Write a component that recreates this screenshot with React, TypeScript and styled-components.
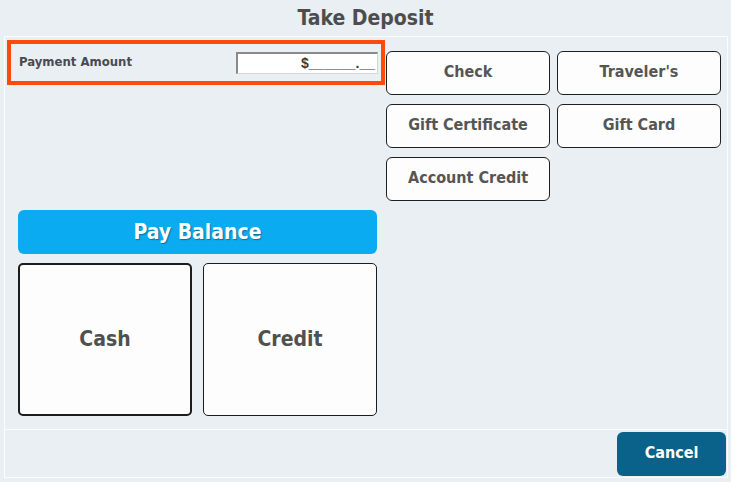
import React from 'react';
import styled, { createGlobalStyle } from 'styled-components';

const GlobalStyle = createGlobalStyle`
  html, body {
    margin: 0;
    padding: 0;
    background: #e9eff2;
  }
  body {
    font-family: "DejaVu Sans Condensed", "DejaVu Sans", "Liberation Sans", sans-serif;
  }
`;

const Screen = styled.div`
  width: 731px;
  height: 482px;
  display: flex;
  flex-direction: column;
  background: #e9eff2;
  overflow: hidden;
`;

const Title = styled.h1`
  margin: 0;
  height: 36px;
  line-height: 36px;
  text-align: center;
  font-size: 21px;
  font-weight: bold;
  color: #4d4d4d;
`;

const Panel = styled.div`
  flex: 1;
  margin: 0 3px 4px 4px;
  border: 1px solid #fbfcfd;
  display: flex;
  flex-direction: column;
`;

const Body = styled.div`
  flex: 1;
  display: flex;
  padding: 3px 0 0 2px;
`;

const LeftColumn = styled.div`
  width: 378px;
  display: flex;
  flex-direction: column;
`;

const PaymentRow = styled.div`
  height: 45px;
  box-sizing: border-box;
  border: 4px solid #ff4a0c;
  display: flex;
  align-items: center;
  justify-content: space-between;
  padding: 0 3px 0 8px;
`;

const Label = styled.span`
  font-size: 13px;
  font-weight: bold;
  color: #4a4a52;
  margin-top: -2px;
`;

const AmountField = styled.div`
  width: 142px;
  height: 22px;
  box-sizing: border-box;
  background: #fff;
  border-style: solid;
  border-width: 2px 1px 1px 2px;
  border-color: #8a8a8a #d4d4d4 #d4d4d4 #8a8a8a;
  text-align: right;
  padding-right: 2px;
  font-family: "Liberation Sans", sans-serif;
  font-size: 14px;
  font-weight: bold;
  line-height: 19px;
  color: #3a3a3a;
`;

const Lower = styled.div`
  margin-top: auto;
  padding: 0 8px 13px 11px;
  display: flex;
  flex-direction: column;
  gap: 9px;
`;

const PayBalance = styled.button`
  height: 44px;
  border: none;
  border-radius: 6px;
  background: #0aabf0;
  color: #fff;
  font-family: inherit;
  font-size: 21px;
  font-weight: bold;
  text-shadow: 1px 1px 1px rgba(0, 0, 0, 0.35);
  cursor: pointer;
`;

const TenderGrid = styled.div`
  display: grid;
  grid-template-columns: 1fr 1fr;
  gap: 11px;
`;

const TenderButton = styled.button<{ $selected?: boolean }>`
  height: 153px;
  box-sizing: border-box;
  border: ${(p) => (p.$selected ? '2px solid #1c1c1c' : '1px solid #1c1c1c')};
  border-radius: 5px;
  background: #fdfdfd;
  color: #505050;
  font-family: inherit;
  font-size: 21px;
  font-weight: bold;
  padding-bottom: 2px;
  cursor: pointer;
`;

const RightColumn = styled.div`
  flex: 1;
  padding: 11px 0 0 1px;
  display: grid;
  grid-template-columns: 164px 164px;
  grid-auto-rows: 44px;
  column-gap: 7px;
  row-gap: 9px;
  align-content: start;
`;

const OptionButton = styled.button`
  box-sizing: border-box;
  border: 1px solid #1f1f1f;
  border-radius: 6px;
  background: #fdfdfd;
  color: #555;
  font-family: inherit;
  font-size: 16px;
  font-weight: bold;
  padding: 0 0 3px;
  cursor: pointer;
`;

const Footer = styled.div`
  height: 47px;
  border-top: 1px solid #fbfcfd;
  display: flex;
  justify-content: flex-end;
  align-items: center;
  padding-right: 1px;
`;

const CancelButton = styled.button`
  width: 109px;
  height: 44px;
  border: none;
  border-radius: 6px;
  background: #0a6189;
  color: #fff;
  font-family: inherit;
  font-size: 16px;
  font-weight: bold;
  padding: 0 0 2px;
  cursor: pointer;
`;

const options = ['Check', "Traveler's", 'Gift Certificate', 'Gift Card', 'Account Credit'];

const App = () => {
  return (
    <Screen>
      <GlobalStyle />
      <Title>Take Deposit</Title>
      <Panel>
        <Body>
          <LeftColumn>
            <PaymentRow>
              <Label>Payment Amount</Label>
              <AmountField>$______.__</AmountField>
            </PaymentRow>
            <Lower>
              <PayBalance>Pay Balance</PayBalance>
              <TenderGrid>
                <TenderButton $selected>Cash</TenderButton>
                <TenderButton>Credit</TenderButton>
              </TenderGrid>
            </Lower>
          </LeftColumn>
          <RightColumn>
            {options.map((o) => (
              <OptionButton key={o}>{o}</OptionButton>
            ))}
          </RightColumn>
        </Body>
        <Footer>
          <CancelButton>Cancel</CancelButton>
        </Footer>
      </Panel>
    </Screen>
  );
};

export default App;
